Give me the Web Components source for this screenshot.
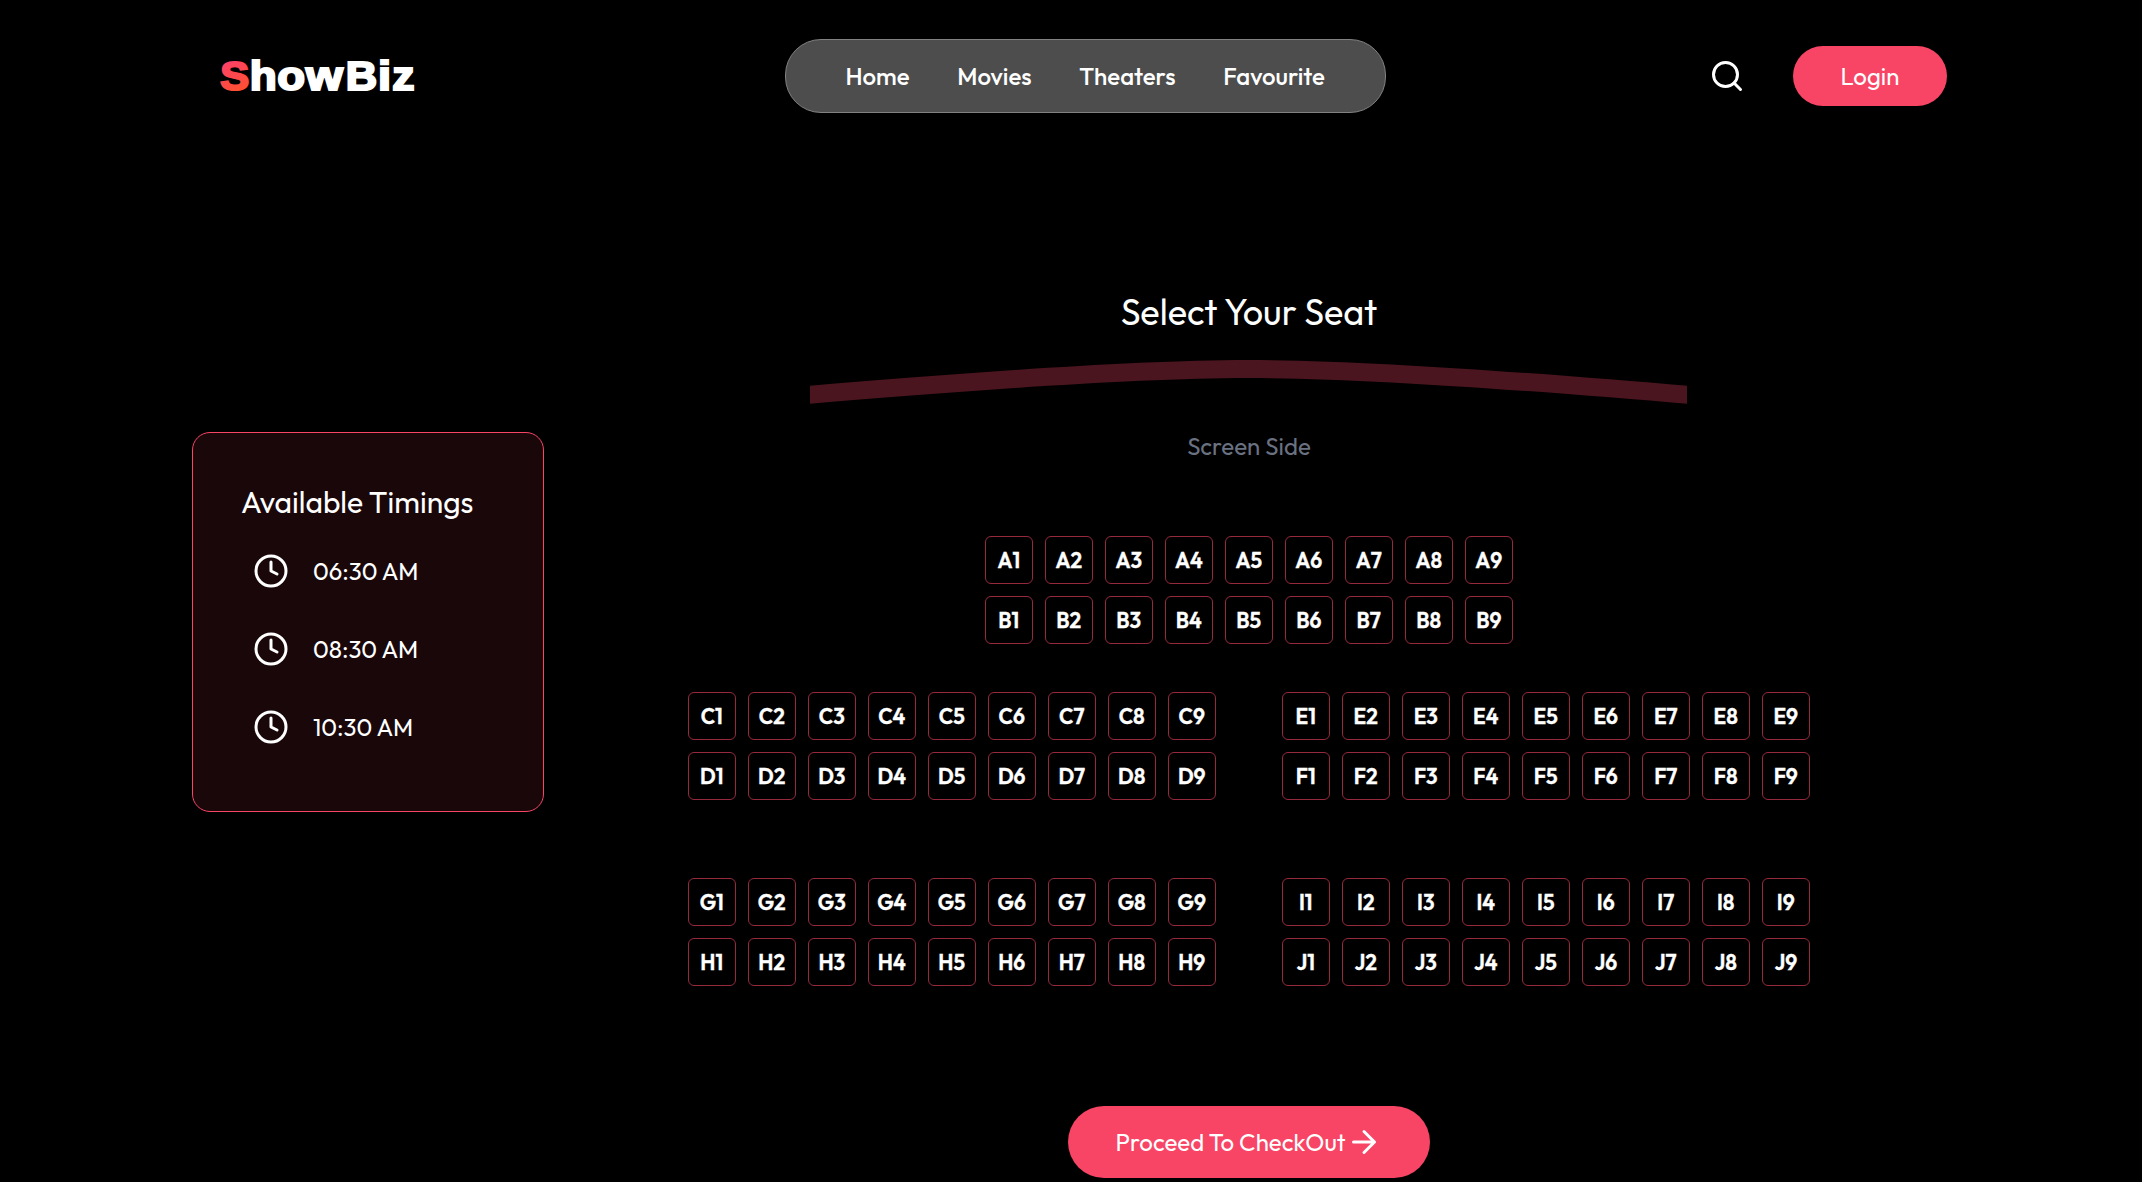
<!DOCTYPE html>
<html lang="en">
<head>
<meta charset="utf-8">
<title>ShowBiz</title>
<style>
html,body{margin:0;height:100%;background:#000;overflow:hidden}
body{font-family:Outfit,Lato,sans-serif;font-size:24px;line-height:36px;color:#fff}
</style>
</head>
<body>
<show-app></show-app>
<script>
const define=(name,html)=>customElements.define(name,class extends HTMLElement{
  connectedCallback(){
    if(this.shadowRoot)return;
    this.attachShadow({mode:'open'}).innerHTML=typeof html==='function'?html(this):html;
  }
});

/* Wordmark letters: glyph, x origin, advance */
const letters=[['h',29.7,27],['o',57.3,27.8],['w',86,36.8],['B',125.7,31.4],['i',158.1,13.1],['z',172.3,22.2]];
define('brand-logo',`<style>:host{display:block;width:210px;height:60px}svg{display:block}text{font-family:"Arial Black","Liberation Sans",sans-serif;font-weight:900;font-size:41px;stroke-width:2.2px}</style>
<svg width="210" height="60" viewBox="0 0 210 60">
<defs><linearGradient id="g" gradientUnits="userSpaceOnUse" x1="6" y1="14" x2="20" y2="46"><stop offset="0" stop-color="#ff4069"/><stop offset="1" stop-color="#ff5030"/></linearGradient></defs>
<text y="44.4" fill="#fff" stroke="#fff"><tspan x=".2" fill="url(#g)" stroke="url(#g)" textLength="29" lengthAdjust="spacingAndGlyphs">S</tspan>${letters.map(([c,x,w])=>`<tspan x="${x}" textLength="${w}" lengthAdjust="spacingAndGlyphs">${c}</tspan>`).join('')}</text></svg>`);

define('nav-menu',`<style>:host{display:flex;box-sizing:border-box;width:601px;height:74px;gap:47.7px;align-items:center;justify-content:center;white-space:nowrap;border:1px solid #828282;border-radius:36px;background:#4d4d4d;font-weight:500}</style>
<span>Home</span><span>Movies</span><span>Theaters</span><span>Favourite</span>`);

define('pill-button',`<style>:host{display:flex;box-sizing:border-box;align-items:center;justify-content:center;background:#f84565;border-radius:36px;white-space:nowrap}</style><slot></slot>`);

define('site-header',`<style>:host{display:flex;align-items:center;height:152px;box-sizing:border-box;padding:0 195px 0 220px}
nav-menu{margin-left:354.7px}.search{margin-left:323.3px;display:block}.login{width:154px;height:60px;margin-left:48px}</style>
<brand-logo></brand-logo><nav-menu></nav-menu>
<svg class="search" width="36" height="36" viewBox="0 0 24 24" fill="none" stroke="#fff" stroke-width="2" stroke-linecap="round"><circle cx="11" cy="11" r="8"/><path d="m21 21-4.3-4.3"/></svg>
<pill-button class="login"><span>Login</span></pill-button>`);

define('time-slot',`<style>:host{display:flex;align-items:center;height:78px;padding-left:12px;gap:24px}svg{display:block}</style>
<svg width="36" height="36" viewBox="0 0 24 24" fill="none" stroke="#fff" stroke-width="2" stroke-linecap="round" stroke-linejoin="round"><circle cx="12" cy="12" r="10"/><path d="M12 6v6l4 2"/></svg><slot></slot>`);

define('timings-panel',`<style>:host{display:block;box-sizing:border-box;width:352px;height:380px;border:1px solid #f84565;border-radius:18px;background:#19070a;padding:48px 0 0 48px}
.title{font-size:30px;line-height:42px}.list{margin-top:9px}</style>
<div class="title">Available Timings</div>
<div class="list"><time-slot>06:30 AM</time-slot><time-slot>08:30 AM</time-slot><time-slot>10:30 AM</time-slot></div>`);

define('screen-arc',`<style>:host{display:block;height:46px}svg{display:block}</style>
<svg width="878" height="46" viewBox="0 0 878 46"><path fill="#4b151f" d="M0 25.8C125 15 320 0 438.5 0S752 15 877 25.8V43.8C752 33 557 18 438.5 18S125 33 0 43.8Z"/></svg>`);

define('seat-box',`<style>:host{display:flex;box-sizing:border-box;width:48px;height:48px;padding-right:.5px;border:1px solid #952a3d;border-radius:6px;align-items:center;justify-content:center;font-size:21px;font-weight:600;line-height:30px;-webkit-text-stroke:.35px #fff}</style><slot></slot>`);

define('seat-block',el=>`<style>:host{display:grid;grid-template-columns:repeat(9,48px);gap:12px}</style>`+
  [...el.getAttribute('rows')].map(r=>[1,2,3,4,5,6,7,8,9].map(n=>`<seat-box>${r}${n}</seat-box>`).join('')).join(''));

define('seat-picker',`<style>:host{display:flex;flex-direction:column;align-items:center;width:1122px}
.title{font-size:36px;line-height:48px}screen-arc{margin-top:24px}.side{color:#6a7282;margin-top:22px}
.first{margin-top:72px}.pair{display:flex;gap:66px;margin-top:48px}.pair+.pair{margin-top:78px}
.go{width:362px;height:72px;margin-top:120px;padding:0 48px 0 47.5px;justify-content:space-between}svg{display:block;flex:none}</style>
<div class="title">Select Your Seat</div>
<screen-arc></screen-arc>
<div class="side">Screen Side</div>
<seat-block class="first" rows="AB"></seat-block>
<div class="pair"><seat-block rows="CD"></seat-block><seat-block rows="EF"></seat-block></div>
<div class="pair"><seat-block rows="GH"></seat-block><seat-block rows="IJ"></seat-block></div>
<pill-button class="go"><span>Proceed To CheckOut</span><svg width="36" height="36" viewBox="0 0 24 24" fill="none" stroke="#fff" stroke-width="2" stroke-linecap="round" stroke-linejoin="round"><path d="M5 12h14M12 5l7 7-7 7"/></svg></pill-button>`);

define('show-app',`<style>:host{display:block;width:2142px;height:1182px;overflow:hidden;background:#000}
main{display:flex;align-items:flex-start;padding-left:192px;gap:144px}timings-panel{margin-top:280px}seat-picker{margin-top:136px}</style>
<site-header></site-header><main><timings-panel></timings-panel><seat-picker></seat-picker></main>`);
</script>
</body>
</html>
